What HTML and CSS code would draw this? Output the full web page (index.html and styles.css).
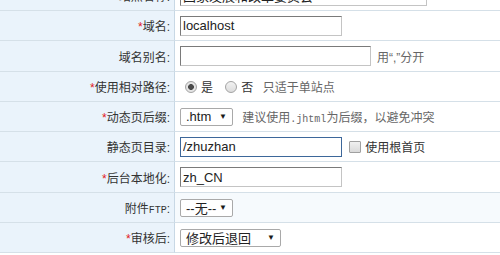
FILE: index.html
```html
<!DOCTYPE html>
<html lang="zh-CN">
<head>
  <meta charset="UTF-8">
  <title>站点设置</title>
  <link rel="stylesheet" href="styles.css">
</head>
<body>

  <table class="form-table">
    <tr>
      <td class="label"><span class="req">*</span>站点名称:</td>
      <td class="field"><input type="text" class="input input-xl" value="国家发展和改革委员会"></td>
    </tr>
    <tr>
      <td class="label"><span class="req">*</span>域名:</td>
      <td class="field"><input type="text" class="input input-md" value="localhost"></td>
    </tr>
    <tr class="tall">
      <td class="label">域名别名:</td>
      <td class="field"><input type="text" class="input input-lg" value=""><span class="hint">用“,”分开</span></td>
    </tr>
    <tr>
      <td class="label"><span class="req">*</span>使用相对路径:</td>
      <td class="field">
        <span class="radio checked"></span><span class="opt">是</span>
        <span class="radio"></span><span class="opt">否</span>
        <span class="hint hint-tight">只适于单站点</span>
      </td>
    </tr>
    <tr>
      <td class="label"><span class="req">*</span>动态页后缀:</td>
      <td class="field">
        <span class="select select-sm"><span>.htm</span><span class="select-arrow">▼</span></span>
        <span class="hint">建议使用<span class="mono">.jhtml</span>为后缀，以避免冲突</span>
      </td>
    </tr>
    <tr>
      <td class="label">静态页目录:</td>
      <td class="field">
        <input type="text" class="input input-md focus" value="/zhuzhan">
        <span class="checkbox"></span><span class="opt">使用根首页</span>
      </td>
    </tr>
    <tr class="tall">
      <td class="label"><span class="req">*</span>后台本地化:</td>
      <td class="field"><input type="text" class="input input-md" value="zh_CN"></td>
    </tr>
    <tr class="hover">
      <td class="label">附件<span class="mono">FTP</span>:</td>
      <td class="field">
        <span class="select select-sm"><span>--无--</span><span class="select-arrow">▼</span></span>
      </td>
    </tr>
    <tr>
      <td class="label"><span class="req">*</span>审核后:</td>
      <td class="field">
        <span class="select select-lg"><span>修改后退回</span><span class="select-arrow">▼</span></span>
      </td>
    </tr>
  </table>

</body>
</html>
```

FILE: styles.css
```css
body {
  margin: 0;
  font-family: "Liberation Sans", Arial, "Noto Sans CJK SC", sans-serif;
  font-size: 12px;
  color: #333;
  background: #fff;
  overflow: hidden;
}

.form-table {
  width: 100%;
  border-spacing: 0;
  table-layout: fixed;
  margin-top: -19px;
}

.form-table td {
  height: 29px;
  padding: 0;
  border-bottom: 1px solid #d5e0e8;
  vertical-align: middle;
  white-space: nowrap;
}

.form-table tr.tall td {
  height: 30px;
}

.form-table .label {
  width: 170px;
  padding-right: 4px;
  text-align: right;
  background-color: #eaf3fb;
  border-right: 1px solid #c8d8e5;
}

.form-table .field {
  padding-left: 5px;
}

.form-table tr.hover .field {
  background-color: #f6fafd;
}

.req {
  color: #e21b1b;
}

.mono {
  font-family: "Liberation Mono", "DejaVu Sans Mono", monospace;
  font-size: 10px;
}

.input {
  box-sizing: border-box;
  height: 20px;
  padding: 0 2px;
  border: 1px solid;
  border-color: #7a7a7a #c4c4c4 #c4c4c4 #7a7a7a;
  font-family: "Liberation Sans", Arial, "Noto Sans CJK SC", sans-serif;
  font-size: 13px;
  color: #222;
  vertical-align: middle;
  outline: none;
}

.input.focus {
  border-color: #3d679a;
}

.input-md {
  width: 162px;
}

.input-lg {
  width: 191px;
}

.input-xl {
  width: 247px;
}

.hint {
  color: #666;
  margin-left: 6px;
  vertical-align: middle;
}

.hint-tight {
  margin-left: 2px;
}

.opt {
  margin: 0 4px 0 4px;
  color: #333;
  vertical-align: middle;
}

.radio {
  display: inline-block;
  box-sizing: border-box;
  width: 12px;
  height: 12px;
  margin-left: 5px;
  border: 1px solid #a3a3a3;
  border-radius: 50%;
  background: linear-gradient(#f2f2f2, #dcdcdc);
  vertical-align: middle;
}

.radio.checked {
  background: radial-gradient(circle, #4a4a4a 0 2.6px, #e4e4e4 3.2px);
}

.checkbox {
  display: inline-block;
  box-sizing: border-box;
  width: 12px;
  height: 12px;
  margin-left: 4px;
  border: 1px solid #a0a0a0;
  border-radius: 1px;
  background: linear-gradient(#f0f0f0, #dadada);
  vertical-align: middle;
}

.select {
  display: inline-flex;
  align-items: center;
  justify-content: space-between;
  box-sizing: border-box;
  height: 18px;
  padding: 0 5px;
  border: 1px solid #a9a9a9;
  border-radius: 2px;
  background: #fff;
  font-size: 13px;
  color: #222;
  vertical-align: middle;
}

.select-arrow {
  font-size: 8px;
  color: #1a1a1a;
}

.select-sm {
  width: 53px;
}

.select-lg {
  width: 101px;
}
```
